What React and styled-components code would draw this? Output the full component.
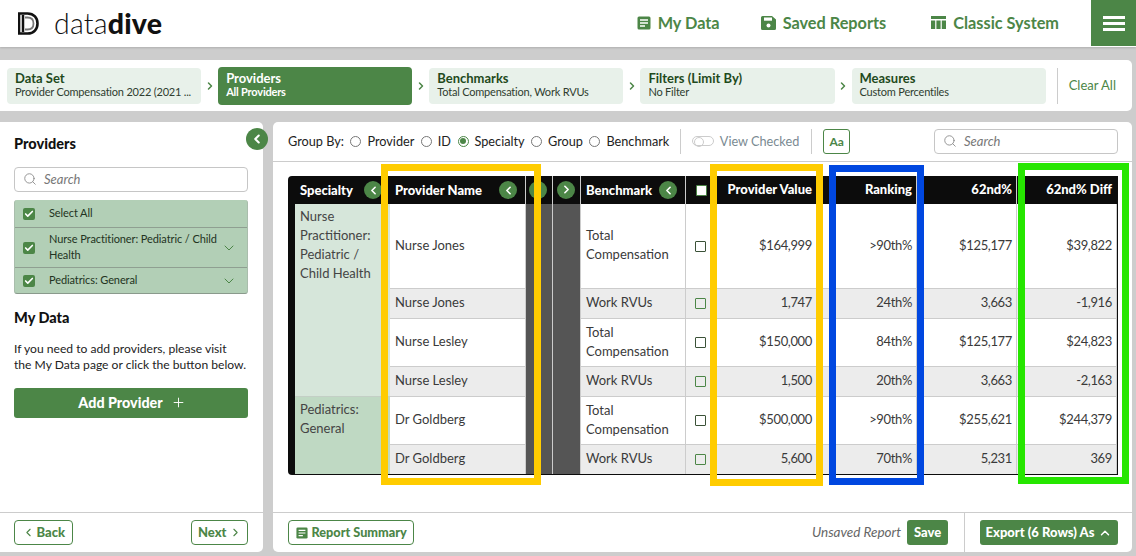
import React from "react";
import styled, { createGlobalStyle } from "styled-components";
import { ChevronLeft, ChevronRight, ChevronDown, ChevronUp, Search, Plus, Check } from "lucide-react";

const green = "#4c8647";
const FONT = `"Lato", "Open Sans", "Liberation Sans", sans-serif`;

const Global = createGlobalStyle`
  html, body { margin: 0; padding: 0; background: #cdcdcd; }
  * { box-sizing: border-box; }
  body { font-family: ${FONT}; color: #333; }
`;

const Page = styled.div`
  width: 1136px; height: 556px; overflow: hidden; background: #cdcdcd;
  display: flex; flex-direction: column; position: relative;
`;
const Header = styled.header`
  height: 47px; background: #fff; display: flex; align-items: center; padding-left: 18px;
  box-shadow: 0 1px 2px rgba(0,0,0,.15);
`;
const Logo = styled.div`
  display: flex; align-items: center; gap: 15px; font-size: 28.5px; color: #111; font-weight: 300; letter-spacing: .2px;
  padding-bottom: 1px;
  b { font-weight: 900; }
`;
const Nav = styled.nav`
  margin-left: auto; display: flex; align-items: center; height: 46px; align-self: flex-start;
`;
const NavItem = styled.a`
  display: flex; align-items: center; gap: 7px; color: ${green}; font-size: 16.3px; font-weight: 700;
  margin-right: ${p => p.$mr}px; white-space: nowrap; padding-bottom: 1px;
  line-height: 20px;
`;
const Burger = styled.div`
  width: 45px; height: 46px; background: ${green}; display: flex; flex-direction: column;
  justify-content: center; align-items: center; gap: 3px;
  span { width: 22px; height: 3px; background: #fff; display: block; }
`;
const StepsBar = styled.div`
  margin-top: 13px; width: 1132px; height: 51px; background: #fff; border-radius: 0 5px 5px 0;
  display: flex; align-items: center; padding: 0 16px 0 7px;
`;
const Steps = styled.div`
  width: 1040px; display: flex; align-items: center;
`;
const Step = styled.div`
  flex: 1 1 0; min-width: 0; height: ${p => p.$active ? 38 : 36}px; border-radius: 4px; padding: 0 8px 2px;
  background: ${p => p.$active ? green : "#e8f1ea"};
  color: ${p => p.$active ? "#fff" : "#2f3d2f"};
  display: flex; flex-direction: column; justify-content: center;
`;
const StepTitle = styled.div`
  font-size: 13px; font-weight: 700; line-height: 13px;
  color: ${p => p.$active ? "#fff" : "#1f4a1c"};
`;
const StepSub = styled.div`
  font-size: 11px; letter-spacing: -.2px; line-height: 13px; white-space: nowrap;
  font-weight: ${p => p.$active ? 700 : 400};
`;
const StepArrow = styled.div`
  width: 17px; flex: none; display: flex; justify-content: center; color: ${green};
`;
const ClearAll = styled.div`
  margin-left: 11px; height: 36px; border-left: 1px solid #ccc; padding: 0 0 2px 11px; flex: 1;
  display: flex; align-items: center; font-size: 13px; color: ${green}; white-space: nowrap;
`;
const Main = styled.main`
  margin-top: 11px; height: 430px; display: flex; gap: 10px; width: 1132px;
`;
const Side = styled.aside`
  width: 263px; background: #fff; border-radius: 0 5px 5px 0; display: flex; flex-direction: column; position: relative;
`;
const SideBody = styled.div`
  flex: 1; padding: 13px 15px 0 14px;
`;
const Collapse = styled.div`
  position: absolute; right: -5px; top: 6px; width: 22px; height: 22px; border-radius: 50%;
  background: ${green}; color: #fff; display: flex; align-items: center; justify-content: center;
`;
const SideTitle = styled.h2`
  font-size: 14.5px; font-weight: 900; color: #111; margin: 0; line-height: 17px;
`;
const SearchBox = styled.div`
  height: 25px; border: 1px solid #c6c6c6; border-radius: 4px; display: flex; align-items: center; gap: 7px;
  padding: 0 0 1px 8px; font-size: 13px; font-style: italic; color: #777; background: #fff;
  width: ${p => p.$w ? p.$w + "px" : "auto"}; margin: ${p => p.$m || 0};
  svg { color: #888; }
`;
const List = styled.div`
  margin-top: 8px; border-radius: 3px; background: #b2cfb6; border-bottom: 1px solid #8a9a8c; 
  border-left: 1px solid #a9bdac; border-right: 1px solid #a9bdac; overflow: hidden;
`;
const ListRow = styled.div`
  min-height: ${p => p.$h}px; display: flex; align-items: center; padding: 0 10px 0 8px;
  border-top: ${p => p.$first ? "0" : "1px solid #8f9f91"}; font-size: 11px; letter-spacing: -.1px; line-height: 16px; color: #223322;
`;
const Tick = styled.span`
  width: 12px; height: 12px; background: ${green}; border-radius: 2px; flex: none; color: #fff;
  display: flex; align-items: center; justify-content: center; margin-right: 14px;
`;
const ListText = styled.span`
  flex: 1; padding-bottom: 2px;
`;
const SideHeading = styled(SideTitle)`
  margin-top: 15px;
`;
const Para = styled.p`
  margin: 15px 0 0; font-size: 12.1px; line-height: 16px; color: #222; white-space: nowrap;
`;
const AddBtn = styled.div`
  margin-top: 15px; height: 30px; background: ${green}; border-radius: 3px; color: #fff; font-size: 14.3px; font-weight: 900;
  display: flex; align-items: center; justify-content: center; gap: 8px; padding: 0 0 2px 2px;
`;
const Foot = styled.div`
  height: 40px; border-top: 1px solid #ccc; display: flex; align-items: center; justify-content: space-between; padding: 0 15px 0 14px;
`;
const OutlineBtn = styled.div`
  height: 25px; border: 1px solid ${green}; border-radius: 4px; color: ${green}; font-size: ${p => p.$fs ?? 13}px; font-weight: 900;
  display: flex; align-items: center; gap: ${p => p.$gap ?? 4}px; padding: 0 ${p => p.$px ?? 8}px; background: #fff; white-space: nowrap;
`;
const BtnLabel = styled.span`
  padding-bottom: 2px;
`;
const Content = styled.section`
  flex: 1; background: #fff; border-radius: 5px; display: flex; flex-direction: column; min-width: 0;
`;
const Toolbar = styled.div`
  height: 40px; flex: none; border-bottom: 1px solid #ccc; display: flex; align-items: center; padding: 0 14px 1px 15px;
  font-size: 12.7px; color: #222;
`;
const GroupLabel = styled.span`
  margin-right: 6.5px; padding-bottom: 1px;
`;
const RadioItem = styled.label`
  display: inline-flex; align-items: center; gap: 6px; margin-right: 6.5px; white-space: nowrap;
`;
const Radio = styled.span`
  width: 11px; height: 11px; border: 1px solid #777; border-radius: 50%; display: inline-block; background: #fff; position: relative;
  ${p => p.$on && `border-color:${green}; &::after{content:"";position:absolute;inset:1.5px;border-radius:50%;background:${green};}`}
`;
const VLine = styled.span`
  width: 1px; height: 25px; background: #ccc; margin: ${p => p.$m};
`;
const Toggle = styled.span`
  width: 22px; height: 10px; border: 1px solid #ccc; border-radius: 5px; position: relative; margin-right: 6px;
  &::before { content: ""; position: absolute; left: 1px; top: 0; width: 8px; height: 8px; border: 1px solid #ccc; border-radius: 50%; }
`;
const ViewChecked = styled.span`
  color: #7a8a92; white-space: nowrap;
`;
const AaBtn = styled.span`
  width: 27px; height: 25px; border: 1px solid ${green}; border-radius: 3px; color: ${green}; font-size: 12px; font-weight: 700;
  display: flex; align-items: center; justify-content: center;
`;
const TableArea = styled.div`
  flex: 1; padding: 14px 14px 0 15px; 
`;
const Table = styled.table`
  border-collapse: separate; border-spacing: 0; table-layout: fixed; width: 830px; font-size: 13px; color: #3a3a3a;
  border-left: 7px solid #0c0c0c; border-right: 1px solid #0c0c0c; border-bottom: 1px solid #0c0c0c; border-top-left-radius: 4px; border-bottom-left-radius: 4px;
`;
const Th = styled.th`
  height: 28px; background: #0c0c0c; color: #fff; font-size: 13px; font-weight: 900; padding: 0 ${p => p.$pad ?? 5}px ${p => p.$right ? 2 : 0}px;
  text-align: ${p => p.$right ? "right" : "left"}; border-right: ${p => p.$noline ? "0" : "1px solid #ccc"}; white-space: nowrap;
`;
const ThInner = styled.div`
  display: flex; align-items: center; justify-content: space-between; padding-right: 3px;
`;
const ThLabel = styled.span`
  padding-bottom: 1px;
`;
const Circle = styled.span`
  width: 18px; height: 18px; border-radius: 50%; background: ${green}; color: #fff; display: inline-flex; align-items: center; justify-content: center; flex: none;
`;
const Td = styled.td`
  height: ${p => p.$h}px; padding: 0 ${p => p.$right ? 4 : 5}px 2px 5px; vertical-align: middle; line-height: 19px;
  background: ${p => p.$alt ? "#ececec" : "#fff"}; letter-spacing: ${p => p.$right ? "-.35px" : "0"};
  border-right: 1px solid #ccc; border-bottom: ${p => p.$last ? "0" : "1px solid #ccc"};
  text-align: ${p => p.$right ? "right" : "left"};
`;
const TdCheck = styled(Td)`
  padding: 0 6px 0 4px;
`;
const SpecCell = styled.td`
  background: ${p => p.$dark ? "#bfd9c3" : "#d6e6da"}; vertical-align: top; padding: 3px 5px; line-height: 19px; color: #444;
  border-bottom: ${p => p.$dark ? 0 : "1px solid #c3cfc5"};
`;
const Dark = styled.td`
  background: #555; border-right: 1px solid #ccc;
`;
const Box = styled.span`
  display: block; width: 11px; height: 11px; border: 1px solid ${p => p.$g ? green : "#3b5238"}; border-radius: 1px; margin: 0 auto; background: ${p => p.$fill ? "#fff" : "transparent"};
`;
const Highlight = styled.div`
  position: absolute; border: 7px solid ${p => p.$c}; left: ${p => p.$x}px; top: ${p => p.$y}px; width: ${p => p.$w}px; height: ${p => p.$h}px; pointer-events: none;
`;
const BottomBar = styled.div`
  height: 40px; flex: none; border-top: 1px solid #ccc; display: flex; align-items: center; padding-left: 15px;
`;
const Unsaved = styled.span`
  margin-left: auto; font-style: italic; font-size: 13.5px; color: #666; margin-right: 6px; padding-bottom: 2px; white-space: nowrap;
`;
const Solid = styled.div`
  height: 25px; border-radius: 3px; background: ${green}; color: #fff; font-size: 13px; font-weight: 900; display: flex; align-items: center; justify-content: center; gap: 4px;
  width: ${p => p.$w}px; white-space: nowrap;
`;
const ExportWrap = styled.div`
  margin-left: 16px; height: 100%; border-left: 1px solid #ccc; padding: 0 14px 0 15px; display: flex; align-items: center;
`;

const DocIcon = ({ s = 14 }) => (
  <svg width={s} height={s} viewBox="0 0 14 14"><rect x="0.5" y="0.5" width="13" height="13" rx="1.5" fill={green} />
    <path d="M3 4h8M3 7h8M3 10h5" stroke="#fff" strokeWidth="1.3" /></svg>
);
const SaveIcon = () => (
  <svg width="15" height="14" viewBox="0 0 15 14"><path d="M1.5 0H11l4 3.5V12.5A1.5 1.5 0 0 1 13.5 14h-12A1.5 1.5 0 0 1 0 12.5v-11A1.5 1.5 0 0 1 1.5 0z" fill={green} />
    <rect x="3" y="1.5" width="8" height="3.2" fill="#fff" /><circle cx="7.5" cy="9.6" r="2" fill="#fff" /></svg>
);
const TableIcon = () => (
  <svg width="15" height="13" viewBox="0 0 15 13"><path d="M0 0h15v3H0zM0 4.5h4.2V13H0zM5.4 4.5h4.2V13H5.4zM10.8 4.5H15V13h-4.2z" fill={green} /></svg>
);
const LogoMark = () => (
  <svg width="21" height="23" viewBox="0 0 21 23" fill="none">
    <path d="M1 1.5h8.5C16 1.5 19.5 6 19.5 11.5S16 21.5 9.5 21.5H1z" stroke="#111" strokeWidth="2.6" />
    <path d="M7 5.5h2.5c4 0 6 2.7 6 6s-2 6-6 6H7" stroke="#777" strokeWidth="1.8" />
    <path d="M5 3v17" stroke="#111" strokeWidth="2.5" />
  </svg>
);

const rows = [
  ["Nurse Jones", "Total Compensation", "$164,999", ">90th%", "$125,177", "$39,822", 85, false],
  ["Nurse Jones", "Work RVUs", "1,747", "24th%", "3,663", "-1,916", 30, true],
  ["Nurse Lesley", "Total Compensation", "$150,000", "84th%", "$125,177", "$24,823", 48, false],
  ["Nurse Lesley", "Work RVUs", "1,500", "20th%", "3,663", "-2,163", 30, true],
  ["Dr Goldberg", "Total Compensation", "$500,000", ">90th%", "$255,621", "$244,379", 48, false],
  ["Dr Goldberg", "Work RVUs", "5,600", "70th%", "5,231", "369", 29, true],
];
const steps = [
  ["Data Set", "Provider Compensation 2022 (2021 ..."],
  ["Providers", "All Providers", true],
  ["Benchmarks", "Total Compensation, Work RVUs"],
  ["Filters (Limit By)", "No Filter"],
  ["Measures", "Custom Percentiles"],
];
const colWidths = [95, 136, 27, 28, 105, 31, 100, 100, 100, 100];

export default function App() {
  return (
    <Page>
      <Global />
      <Header>
        <Logo><LogoMark /><span>data<b>dive</b></span></Logo>
        <Nav>
          <NavItem $mr={41}><DocIcon />My Data</NavItem>
          <NavItem $mr={45}><SaveIcon />Saved Reports</NavItem>
          <NavItem $mr={32}><TableIcon />Classic System</NavItem>
          <Burger><span /><span /><span /></Burger>
        </Nav>
      </Header>
      <StepsBar>
        <Steps>
          {steps.map(([t, s, a], i) => (
            <React.Fragment key={t}>
              {i > 0 && <StepArrow><ChevronRight size={12} strokeWidth={3} /></StepArrow>}
              <Step $active={a}><StepTitle $active={a}>{t}</StepTitle><StepSub $active={a}>{s}</StepSub></Step>
            </React.Fragment>
          ))}
        </Steps>
        <ClearAll>Clear All</ClearAll>
      </StepsBar>
      <Main>
        <Side>
          <Collapse><ChevronLeft size={14} strokeWidth={3.5} /></Collapse>
          <SideBody>
            <SideTitle>Providers</SideTitle>
            <SearchBox $m="15px 0 0"><Search size={14} strokeWidth={1.5} />Search</SearchBox>
            <List>
              <ListRow $h={27} $first><Tick><Check size={10} strokeWidth={4} /></Tick><ListText>Select All</ListText></ListRow>
              <ListRow $h={40}><Tick><Check size={10} strokeWidth={4} /></Tick><ListText>Nurse Practitioner: Pediatric / Child Health</ListText><ChevronDown size={16} color={green} strokeWidth={1.5} /></ListRow>
              <ListRow $h={26}><Tick><Check size={10} strokeWidth={4} /></Tick><ListText>Pediatrics: General</ListText><ChevronDown size={16} color={green} strokeWidth={1.5} /></ListRow>
            </List>
            <SideHeading>My Data</SideHeading>
            <Para>If you need to add providers, please visit<br />the My Data page or click the button below.</Para>
            <AddBtn>Add Provider <Plus size={15} strokeWidth={1.5} /></AddBtn>
          </SideBody>
          <Foot>
            <OutlineBtn $px={6.5} $gap={2}><ChevronLeft size={13} strokeWidth={2} /><BtnLabel>Back</BtnLabel></OutlineBtn>
            <OutlineBtn $px={5.5} $gap={2}><BtnLabel>Next</BtnLabel><ChevronRight size={13} strokeWidth={2} /></OutlineBtn>
          </Foot>
        </Side>
        <Content>
          <Toolbar>
            <GroupLabel>Group By:</GroupLabel>
            <RadioItem><Radio />Provider</RadioItem>
            <RadioItem><Radio />ID</RadioItem>
            <RadioItem><Radio $on />Specialty</RadioItem>
            <RadioItem><Radio />Group</RadioItem>
            <RadioItem><Radio />Benchmark</RadioItem>
            <VLine $m="0 11px 0 4px" />
            <Toggle />
            <ViewChecked>View Checked</ViewChecked>
            <VLine $m="0 11px 0 12px" />
            <AaBtn>Aa</AaBtn>
            <SearchBox $w={184} $m="0 0 0 auto"><Search size={14} strokeWidth={1.5} />Search</SearchBox>
          </Toolbar>
          <TableArea>
            <Table>
              <colgroup>{colWidths.map((w, i) => <col key={i} style={{ width: w }} />)}</colgroup>
              <thead>
                <tr>
                  <Th $noline $pad={5}><ThInner><ThLabel>Specialty</ThLabel><Circle><ChevronLeft size={13} strokeWidth={3} /></Circle></ThInner></Th>
                  <Th><ThInner><ThLabel>Provider Name</ThLabel><Circle><ChevronLeft size={13} strokeWidth={3} /></Circle></ThInner></Th>
                  <Th $pad={3}><Circle><ChevronLeft size={13} strokeWidth={3} /></Circle></Th>
                  <Th $pad={4}><Circle><ChevronRight size={13} strokeWidth={3} /></Circle></Th>
                  <Th><ThInner><ThLabel>Benchmark</ThLabel><Circle><ChevronLeft size={13} strokeWidth={3} /></Circle></ThInner></Th>
                  <Th $pad={4}><Box $g $fill /></Th>
                  <Th $right $pad={4}>Provider Value</Th>
                  <Th $right $pad={4}>Ranking</Th>
                  <Th $right $pad={4}>62nd%</Th>
                  <Th $right $pad={5} $noline>62nd% Diff</Th>
                </tr>
              </thead>
              <tbody>
                {rows.map((r, i) => (
                  <tr key={i}>
                    {i === 0 && <SpecCell rowSpan={4}>Nurse Practitioner: Pediatric / Child Health</SpecCell>}
                    {i === 4 && <SpecCell rowSpan={2} $dark>Pediatrics: General</SpecCell>}
                    <Td $h={r[6]} $alt={r[7]} $last={i === 5}>{r[0]}</Td>
                    <Dark />
                    <Dark />
                    <Td $h={r[6]} $alt={r[7]} $last={i === 5}>{r[1]}</Td>
                    <TdCheck $h={r[6]} $alt={r[7]} $last={i === 5}><Box $g={r[7]} /></TdCheck>
                    <Td $right $h={r[6]} $alt={r[7]} $last={i === 5}>{r[2]}</Td>
                    <Td $right $h={r[6]} $alt={r[7]} $last={i === 5}>{r[3]}</Td>
                    <Td $right $h={r[6]} $alt={r[7]} $last={i === 5}>{r[4]}</Td>
                    <Td $right $h={r[6]} $alt={r[7]} $last={i === 5}>{r[5]}</Td>
                  </tr>
                ))}
              </tbody>
            </Table>
          </TableArea>
          <BottomBar>
            <OutlineBtn $px={6.5} $fs={12.7}><DocIcon s={12} /><BtnLabel>Report Summary</BtnLabel></OutlineBtn>
            <Unsaved>Unsaved Report</Unsaved>
            <Solid $w={41}><BtnLabel>Save</BtnLabel></Solid>
            <ExportWrap><Solid $w={138}><BtnLabel>Export (6 Rows) As</BtnLabel> <ChevronUp size={14} strokeWidth={2.5} /></Solid></ExportWrap>
          </BottomBar>
        </Content>
      </Main>
      <Highlight $c="#ffcc00" $x={381} $y={164} $w={160} $h={321} />
      <Highlight $c="#ffcc00" $x={710} $y={164} $w={113} $h={322} />
      <Highlight $c="#0047e0" $x={829} $y={165} $w={95} $h={320} />
      <Highlight $c="#26e600" $x={1018} $y={163} $w={111} $h={321} />
    </Page>
  );
}
